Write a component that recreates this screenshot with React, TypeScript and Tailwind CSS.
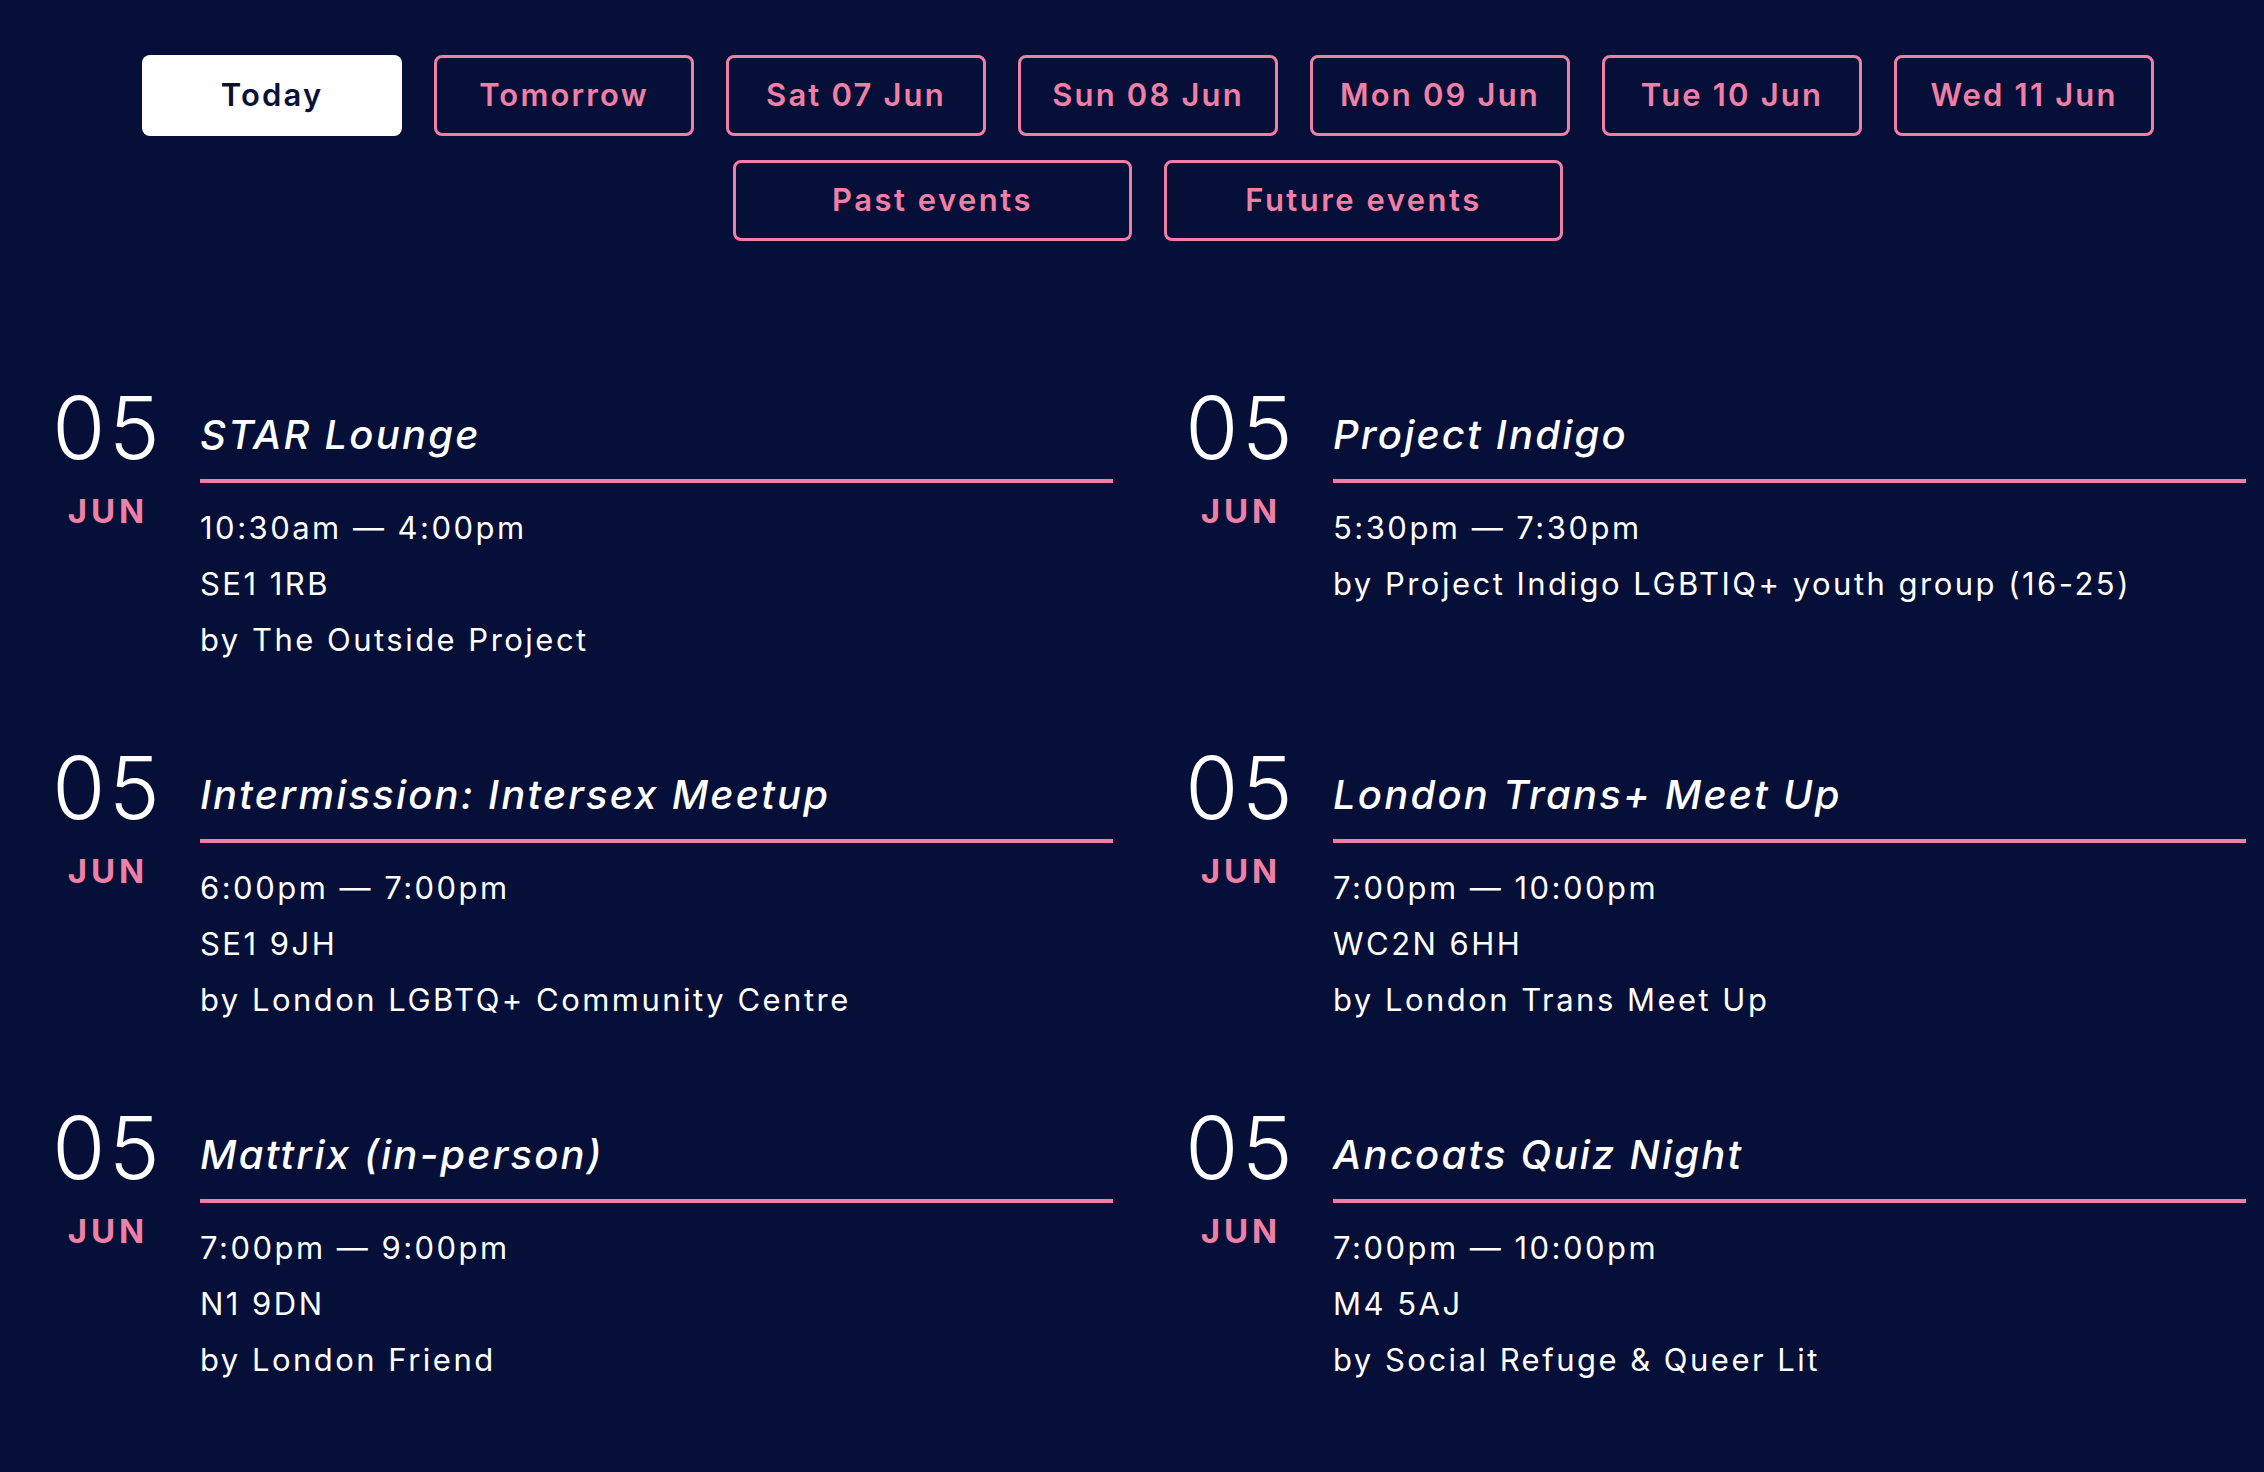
import React from "react";

type EventItem = {
  title: string;
  time: string;
  postcode?: string;
  by: string;
};

const days = [
  "Today",
  "Tomorrow",
  "Sat 07 Jun",
  "Sun 08 Jun",
  "Mon 09 Jun",
  "Tue 10 Jun",
  "Wed 11 Jun",
];

const events: EventItem[] = [
  { title: "STAR Lounge", time: "10:30am — 4:00pm", postcode: "SE1 1RB", by: "by The Outside Project" },
  { title: "Project Indigo", time: "5:30pm — 7:30pm", by: "by Project Indigo LGBTIQ+ youth group (16-25)" },
  { title: "Intermission: Intersex Meetup", time: "6:00pm — 7:00pm", postcode: "SE1 9JH", by: "by London LGBTQ+ Community Centre" },
  { title: "London Trans+ Meet Up", time: "7:00pm — 10:00pm", postcode: "WC2N 6HH", by: "by London Trans Meet Up" },
  { title: "Mattrix (in-person)", time: "7:00pm — 9:00pm", postcode: "N1 9DN", by: "by London Friend" },
  { title: "Ancoats Quiz Night", time: "7:00pm — 10:00pm", postcode: "M4 5AJ", by: "by Social Refuge & Queer Lit" },
];

const EventCard = ({ event }: { event: EventItem }) => (
  <div className="flex">
    <div className="w-[112px] shrink-0 flex flex-col items-center">
      <div className="text-[86px] leading-[84px] font-light tracking-[0.04em] pl-[0.04em] text-white">05</div>
      <div className="mt-[21px] text-[33px] leading-[40px] font-bold tracking-[0.12em] text-[#ef7fa5] pl-[0.12em]">
        JUN
      </div>
    </div>
    <div className="ml-[38px] flex-1 min-w-0">
      <h3 className="mt-[19px] pb-[14px] border-b-4 border-[#ef7fa5] text-[40px] leading-[60px] italic font-medium tracking-[0.055em] text-white">
        {event.title}
      </h3>
      <div className="mt-[17px] text-[31px] leading-[56px] tracking-[0.08em] text-white">
        <p>{event.time}</p>
        {event.postcode && <p>{event.postcode}</p>}
        <p>{event.by}</p>
      </div>
    </div>
  </div>
);

export default function App() {
  return (
    <div
      className="min-h-[1472px] bg-[#060f38] pl-[50px] pr-[18px] pt-[55px] pb-[80px]"
      style={{ fontFamily: "Inter, 'Noto Sans', sans-serif" }}
    >
      <div className="flex flex-wrap justify-center gap-x-[32px] gap-y-[24px]">
        {days.map((d, i) =>
          i === 0 ? (
            <button
              key={d}
              className="w-[260px] h-[81px] rounded-[8px] bg-white text-[#0a1138] text-[31px] font-semibold tracking-[0.07em]"
            >
              {d}
            </button>
          ) : (
            <button
              key={d}
              className="w-[260px] h-[81px] rounded-[8px] border-[3px] border-[#ef7fa5] text-[#ef7fa5] text-[31px] font-semibold tracking-[0.07em]"
            >
              {d}
            </button>
          )
        )}
        {["Past events", "Future events"].map((d) => (
          <button
            key={d}
            className="w-[399px] h-[81px] rounded-[8px] border-[3px] border-[#ef7fa5] text-[#ef7fa5] text-[31px] font-semibold tracking-[0.08em]"
          >
            {d}
          </button>
        ))}
      </div>

      <div className="mt-[145px] grid grid-cols-2 gap-x-[70px] gap-y-[78px]">
        {events.map((e) => (
          <EventCard key={e.title} event={e} />
        ))}
      </div>
    </div>
  );
}
